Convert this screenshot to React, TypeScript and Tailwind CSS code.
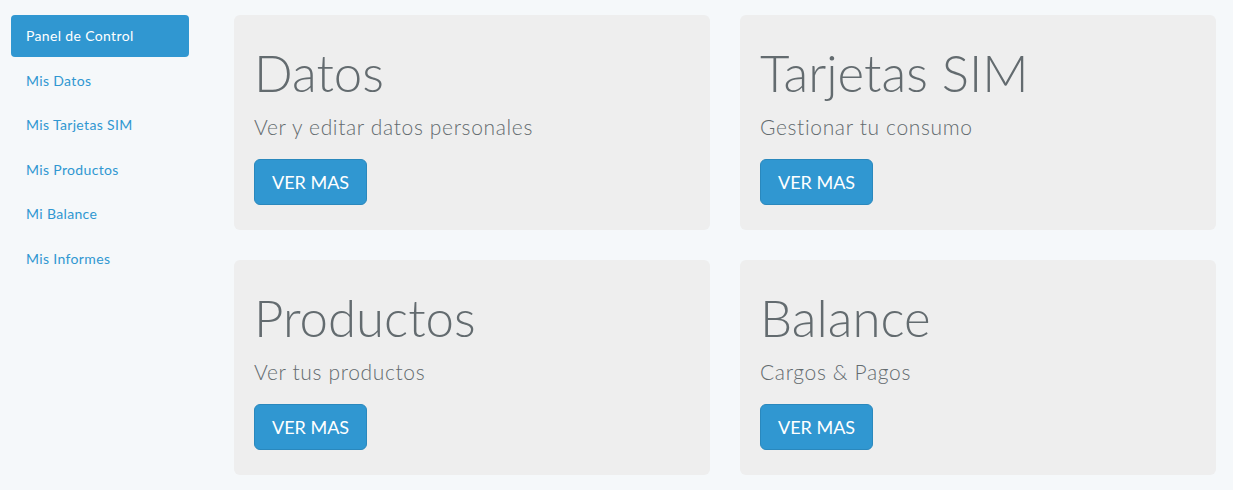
import React from 'react'

interface NavItem {
  label: string;
  active?: boolean;
}

interface PanelCard {
  title: string;
  subtitle: string;
}

const navItems: NavItem[] = [
  { label: 'Panel de Control', active: true },
  { label: 'Mis Datos' },
  { label: 'Mis Tarjetas SIM' },
  { label: 'Mis Productos' },
  { label: 'Mi Balance' },
  { label: 'Mis Informes' },
];

const cards: PanelCard[] = [
  { title: 'Datos', subtitle: 'Ver y editar datos personales' },
  { title: 'Tarjetas SIM', subtitle: 'Gestionar tu consumo' },
  { title: 'Productos', subtitle: 'Ver tus productos' },
  { title: 'Balance', subtitle: 'Cargos & Pagos' },
];

const Card: React.FC<PanelCard> = ({ title, subtitle }) => (
  <div className="bg-[#eeeeee] rounded-[6px] pt-[29px] pb-[25px] px-[20px] flex flex-col items-start">
    <h1 className="text-[51px] leading-[57px] text-[#636b6f] font-light">{title}</h1>
    <p className="mt-[11px] text-[21px] leading-[30px] text-[#636b6f] font-light tracking-[0.65px]">{subtitle}</p>
    <button className="mt-[17px] bg-[#3097d1] border border-[#2a88bd] rounded-[6px] px-[17px] py-[10px] text-[18px] leading-[24px] text-white">
      VER MAS
    </button>
  </div>
)

export default function App() {
  return (
    <div className="min-h-[490px] bg-[#f5f8fa] font-['Lato',sans-serif] flex items-start pt-[15px]">
      {/* Sidebar */}
      <nav className="ml-[11px] w-[178px] flex flex-col gap-[2.5px]">
        {navItems.map((item, i) => (
          <a
            key={i}
            className={`block rounded-[4px] px-[15px] py-[10px] text-[14px] leading-[22px] tracking-[0.35px] ${
              item.active ? 'bg-[#3097d1] text-white' : 'text-[#3097d1]'
            }`}
          >
            {item.label}
          </a>
        ))}
      </nav>

      {/* Cards */}
      <main className="ml-[45px] grid grid-cols-[476px_476px] gap-[30px]">
        {cards.map((card, i) => (
          <Card key={i} {...card} />
        ))}
      </main>
    </div>
  )
}
